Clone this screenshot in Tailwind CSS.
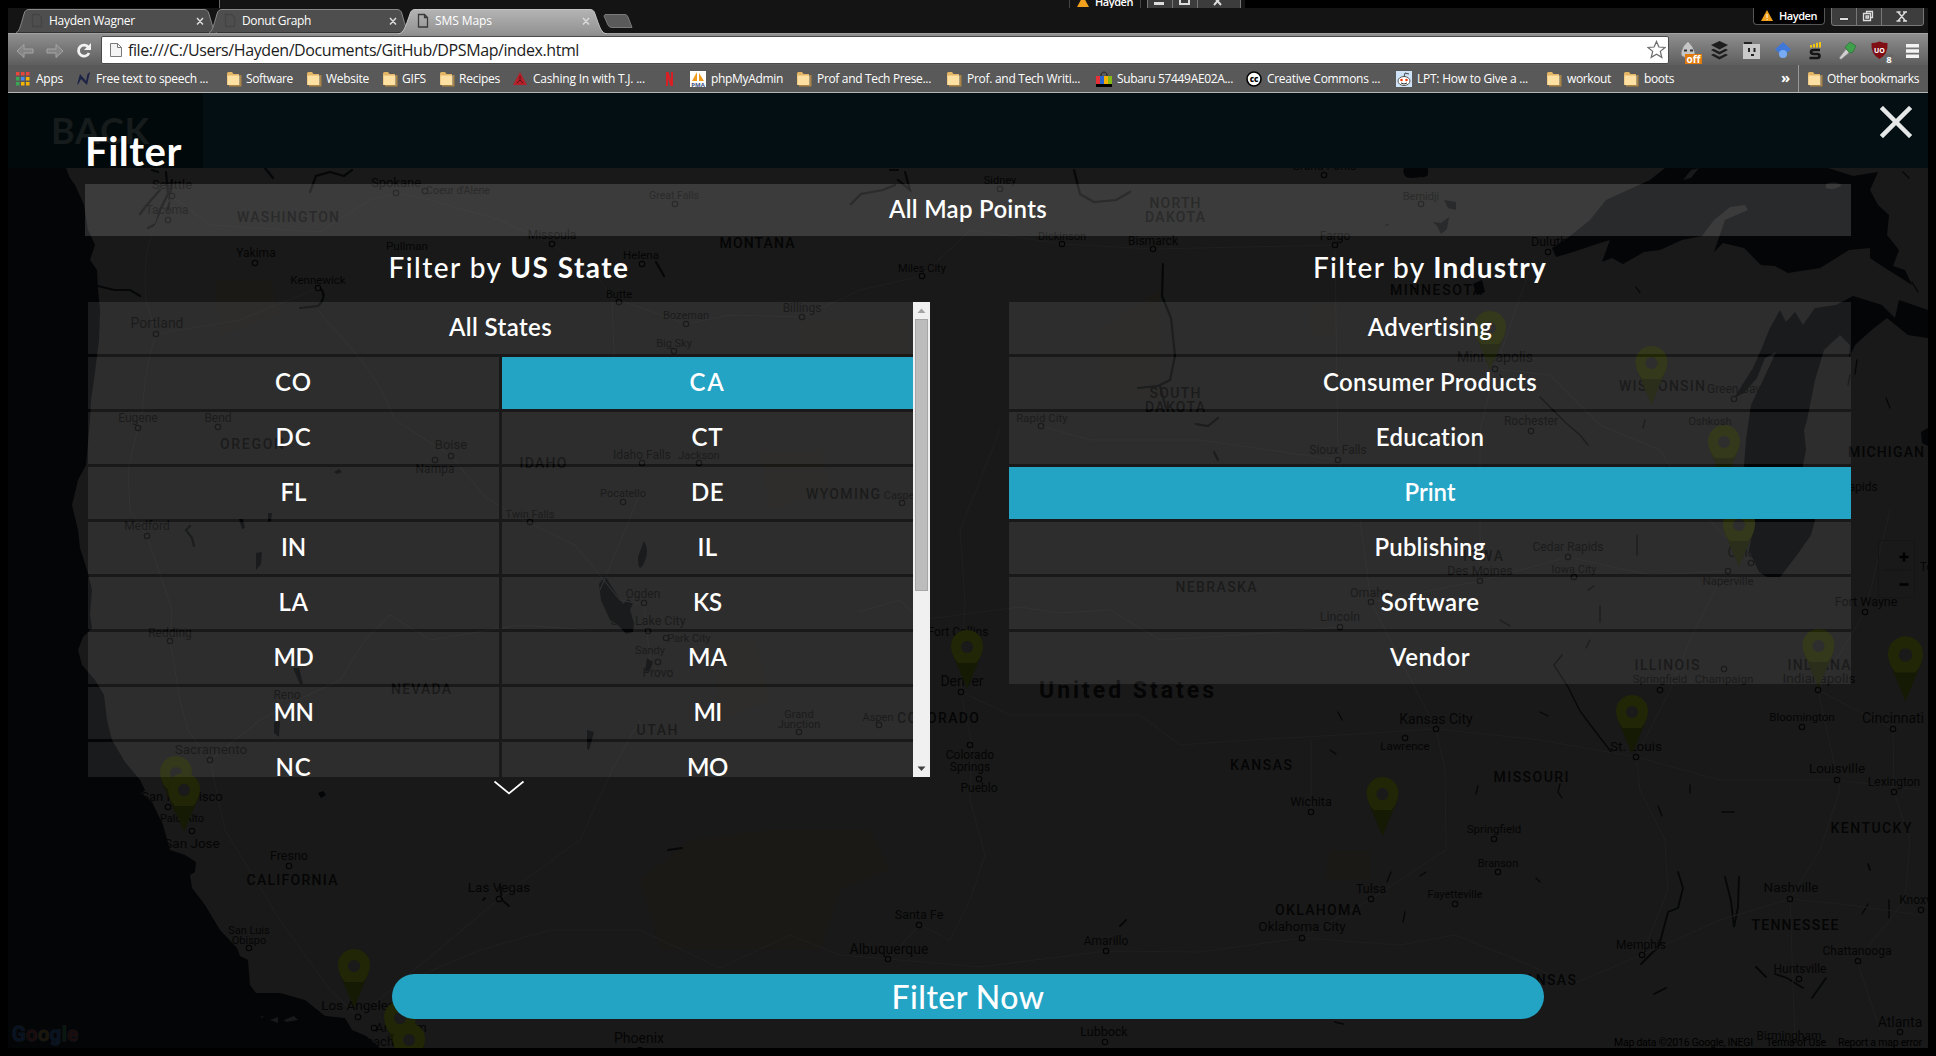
<!DOCTYPE html>
<html lang="en">
<head>
<meta charset="utf-8">
<title>SMS Maps</title>
<script src="https://cdn.jsdelivr.net/npm/@tailwindcss/browser@4"></script>
</head>
<body class="bg-black">
<div class="relative flex h-[1056px] w-[1936px] flex-col overflow-hidden bg-black font-['Open_Sans',sans-serif]">

  <!-- strip of the window behind -->
  <div class="flex h-2 shrink-0 overflow-hidden pl-[219px]">
    <div class="flex h-2 w-[1026px] border-l border-[#666] bg-[#141414]">
      <div class="ml-[849px] flex h-2 w-[72px] items-end justify-center gap-1.5 border-x border-[#444]">
        <svg class="h-2 w-3" viewBox="0 0 12 8"><path d="M6-4L12 7H0z" fill="#f0a01c"/></svg>
        <span class="h-2 text-[11px] leading-[4px] font-semibold text-white" data-w="38">Hayden</span>
      </div>
      <svg class="ml-1.5 h-2 w-[94px]" viewBox="0 0 94 8"><path d="M0 0h94v8H0z" fill="#3c3c3c"/><path d="M25.500 0v8M50.500 0v8M93.500 0v8M.5 0v8" stroke="#777"/><path d="M7 2h10v3H7z" fill="#ddd"/><path d="M33-3h9v7h-9z" fill="none" stroke="#ddd" stroke-width="2"/><path d="M74 5l-7-8M67 5l7-8" stroke="#ddd" stroke-width="2"/></svg>
    </div>
  </div>

  <div class="mx-2 flex h-[1040px] w-[1920px] flex-col overflow-hidden">
    <!-- tab strip -->
    <div class="relative flex h-[25px] shrink-0 justify-between bg-[#141414]">
      <svg class="absolute top-0 left-0 h-[26px] w-[640px]" viewBox="8 8 640 26">
        <defs><linearGradient id="act" x1="0" y1="0" x2="0" y2="1"><stop offset="0" stop-color="#b4b4b4"/><stop offset="1" stop-color="#929292"/></linearGradient></defs>
        <path d="M16 32.500C19 32 20 28 24 14Q25 9.500 29 9.500H204Q208 9.500 209 14C213 28 214 32 217 32.500" fill="#4e4e4e" stroke="#8a8a8a"/>
        <path d="M209 32.500C212 32 213 28 217 14Q218 9.500 222 9.500H397Q401 9.500 402 14C406 28 407 32 410 32.500" fill="#4e4e4e" stroke="#8a8a8a"/>
        <path d="M398 34C404 33 405 28 410 14Q411 9.500 415 9.500H590Q594 9.500 595 14C600 28 601 33 607 34" fill="url(#act)" stroke="#c4c4c4"/>
        <path d="M605 14.500H625Q627 14.500 628 17L632 27.500H612Q609 27.500 608 25L604 16z" fill="#5a5a5a" stroke="#7a7a7a"/>
        <g fill="none" stroke-width="1.300"><path d="M32.500 14.500h6l3 3v9h-9zM225.500 14.500h6l3 3v9h-9z" stroke="#444"/><path d="M418.500 14.500h6l3 3v9.500h-9zM424.500 14.500v3h3" stroke="#3a3a3a"/></g>
        <path d="M197 18l6 6.500M203 18l-6 6.500M390 18l6 6.500M396 18l-6 6.500M583 18l6 6.500M589 18l-6 6.500" stroke="#dadada" stroke-width="1.500"/>
      </svg>
      <div class="relative flex pl-[41px] text-[12px] leading-[26px] whitespace-nowrap text-white">
        <div class="w-[193px]"><span data-w="86">Hayden Wagner</span></div>
        <div class="w-[193px]"><span data-w="69">Donut Graph</span></div>
        <div class="w-[150px]"><span data-w="57">SMS Maps</span></div>
      </div>
      <div class="flex pr-1">
        <div class="flex h-[17px] w-[72px] items-center justify-center gap-1.5 rounded-b border border-t-0 border-[#555] bg-black text-[11px] font-semibold text-white">
          <svg class="h-3 w-3" viewBox="0 0 12 12"><path d="M6 0L12 11H0z" fill="#f0a01c"/><path d="M6 4v4M6 9v1" stroke="#fff"/></svg>
          <span data-w="38">Hayden</span>
        </div>
        <svg class="ml-1.5 h-[18px] w-[93px]" viewBox="0 0 93 18"><path d="M.5 0V15Q.5 17.500 3 17.500H90Q92.500 17.500 92.500 15V0" fill="#3d3d3d" stroke="#777"/><path d="M25.500 0V17M50.500 0V17" stroke="#777"/><path d="M8.500 9.500h9v3h-9z" fill="#ddd" stroke="#333"/><path d="M32.500 5.500h7v7h-7zM35.500 5V3.500h6v6H40M35 8h2.500v2H35z" fill="none" stroke="#ddd" stroke-width="1.300"/><path d="M67 4l7.500 9M74.500 4L67 13M65.500 4h4M72 4h4M65.500 13h4M72 13h4" stroke="#ddd" stroke-width="1.400"/></svg>
      </div>
    </div>

    <!-- toolbar -->
    <div class="flex h-8 shrink-0 items-center border-t border-[#a2a2a2] bg-gradient-to-b from-[#8f8f8f] to-[#5e5e5e]">
      <svg class="h-8 w-[93px] shrink-0" viewBox="8 34 93 32"><g fill="#858585" stroke="#a5a5a5" stroke-width="1"><path d="M17 51l7-6.500v4.500h9v4h-9v4.500z"/><path d="M63 51l-7-6.500v4.500h-9v4h9v4.500z"/></g><path d="M88.500 47.500A5.500 5.500 0 1 0 89 53" fill="none" stroke="#f2f2f2" stroke-width="2.800"/><path d="M91 43v7h-7z" fill="#f2f2f2"/></svg>
      <div class="flex h-[28px] w-[1568px] shrink-0 items-center rounded-xs border border-[#4a4a4a] bg-white pr-0.5 pl-2">
        <svg class="h-4 w-3" viewBox="0 0 12 16"><path d="M.5 1.500h7l4 4v9H.5zM7.500 1.500v4h4" fill="#f4f4f4" stroke="#7a7a7a"/></svg>
        <span class="ml-[6px] text-[16px] leading-none whitespace-nowrap text-[#1c1c1c]" data-w="451">file:///C:/Users/Hayden/Documents/GitHub/DPSMap/index.html</span>
        <svg class="ml-auto h-[19px] w-[19px]" viewBox="0 0 20 20"><path d="M10 1.500l2.500 5.900 6.400.5-4.900 4.100 1.600 6.300L10 14.900l-5.600 3.400L6 12 1.100 7.900l6.400-.5z" fill="#fff" stroke="#6e6e6e" stroke-width="1.300"/></svg>
      </div>
      <svg class="h-8 w-[259px] shrink-0" viewBox="1669 34 259 32">
        <path d="M1688 41q6 6 7 11t-7 5.500-7-5.500 7-11z" fill="#c5c5c5" stroke="#777"/><path d="M1684 50.500h3M1690 50.500h3" stroke="#333" stroke-width="2"/><rect x="1685" y="54" width="17" height="10" fill="#e07b0c"/><text x="1693.500" y="62.500" font-size="10" font-weight="700" fill="#fff" text-anchor="middle">off</text>
        <g fill="#1d1d1d"><path d="M1719.500 41l8.500 4-8.500 4.500-8.500-4.500z"/><path d="M1711 50l2.500-1.200 6 3 6-3L1728 50l-8.500 4.400z"/><path d="M1711 55l2.500-1.200 6 3 6-3L1728 55l-8.500 4.500z"/></g>
        <path d="M1743 44h17v15h-17z" fill="#c9c9c9"/><path d="M1744 42h8v2h-8zM1748 48h2v4h-2zM1753.500 48h2v4h-2zM1751 54h3v2h-3z" fill="#222"/>
        <path d="M1783 42l8 7.500-5 4h-6l-5-4z" fill="#3f78d8"/><circle cx="1783" cy="54" r="4" fill="#79aaf5"/>
        <path d="M1820 50h-6q-3 0-3 2t3 2h3.500q2 0 2 2t-2 2h-8" fill="none" stroke="#161616" stroke-width="2.600"/><path d="M1810 45h2v2.500h-2zM1813 44h2v3.500h-2zM1816 42.800h2v4.700h-2zM1819 42h2v5.500h-2z" fill="#f3c513"/>
        <path d="M1839 58l7-9 4 3-9 7.500z" fill="#cfcfcf" stroke="#777" stroke-width=".7"/><path d="M1845 47l5-5 6 4-3 6-3.500 1z" fill="#3fa04c" stroke="#286f32" stroke-width=".7"/>
        <path d="M1871.500 43q4 0 8-1.500 4 1.500 8 1.500 1 11-8 16-9-5-8-16z" fill="#7f0f14"/><text x="1879.500" y="52.500" font-size="7" font-weight="700" fill="#fff" text-anchor="middle">UO</text><rect x="1885" y="54" width="8" height="10" rx="1" fill="#666"/><text x="1889" y="63" font-size="9.500" font-weight="700" fill="#fff" text-anchor="middle">8</text>
        <path d="M1906 44h13v3.500h-13zM1906 49.300h13v3.500h-13zM1906 54.600h13v3.500h-13z" fill="#f4f4f4"/>
      </svg>
    </div>

    <!-- bookmarks -->
    <div id="bookmarks" class="flex h-[28px] shrink-0 items-center border-b border-[#b4b4b4] bg-[#595959] pl-2 text-[12px] whitespace-nowrap text-white"></div>

    <!-- page -->
    <div class="relative h-[955px] w-[1920px] overflow-hidden bg-[#191919]">
      <svg id="map" class="absolute inset-0 h-[955px] w-[1920px] font-[Roboto,sans-serif]" viewBox="8 93 1920 955">
        <g fill="#1a1916"><path d="M215 280h55l10 35-60 20zM640 880l50-40 80-10 100 0 20 40-50 20-20 60-160 0zM800 320h110v40H800zM760 450h60l10 40-60 20zM715 640h40l15 60-50 20zM1100 330l60-40v110h-60zM1330 850h40v30h-45zM1310 305h25v30h-25z"/></g>
        <path fill="#040507" d="M8 168H66L70 178 75 185 84 205 88 230 95 245 90 260 97 270 98 290 100 310 99 340 94 380 91 400 90 420 86 465 78 480 72 505 78 530 80 548 87 570 92 590 90 615 92 628 83 637 78 650 82 665 95 680 104 695 107 720 112 740 125 762 140 780 145 790 141 794 152 802 163 825 170 850 185 855 196 862 195 872 190 875 192 888 205 905 220 930 237 948 240 956 248 960 250 985 256 993 280 993 305 1000 325 1016 345 1018 352 1030 366 1036 380 1048H8z"/>
        <g fill="#040507">
          <path d="M1665 168L1650 180 1606 200 1590 220 1569 237 1552 248 1556 257 1573 252 1600 243 1610 240 1602 262 1612 258 1623 264 1644 252 1660 250 1682 240 1702 236 1714 220 1730 207 1745 205 1748 210 1725 220 1714 252 1723 243 1744 248 1761 265 1775 266 1788 273 1820 268 1849 250 1870 248 1870 258 1882 266 1901 278 1912 285 1905 270 1893 266 1899 250 1887 235 1889 215 1878 205 1870 190 1878 172 1853 176 1828 168z"/>
          <path d="M1780 310L1769 330 1761 350 1753 368 1734 398 1744 393 1757 378 1765 358 1776 352 1763 380 1751 405 1746 440 1744 465 1752 490 1755 520 1749 550 1759 572 1767 577 1780 577 1797 555 1811 535 1815 520 1809 490 1802 470 1806 450 1804 430 1807 420 1815 380 1824 350 1840 335 1850 345 1849 358 1855 345 1866 335 1874 328 1887 318 1908 335 1928 338V310L1899 300 1895 318 1882 305 1853 296 1836 305 1815 308 1803 325 1795 312 1786 322z"/>
          <path d="M605 576l-6 8 2 16 9 20 8 5 8 9 7-2 1-9-4-13 3-7-5-4-5 5-9-14z"/>
          <path d="M1404 168h24v7q-3 3-8 2-8 2-14 0-4-4-2-9zM1921 432l7-4v18l-6-3z"/>
          <path d="M644 541q6 10 0 22t-6-6zM239 519h4l2 9-3 1zM334 472l5-3 3 3-5 2zM256 553l6-1-1 12-5 6zM268 513h4l-1 8-3 1zM293 668l6 0 4 16-3 0zM274 722l6-1-1 16-5-4zM587 730l7 2-5 18-2-1zM318 793l5-2 3 4-5 3zM1473 284l9-4 3 12-8 3zM1444 200l12 2 0 8-8-2zM1433 222l8 1 8-6-2 12-6 5-4-8zM647 658l6 4-3 8-5 2z"/>
        </g>
        <g fill="none" stroke="#060708" stroke-linecap="round" stroke-width="2.200">
          <path d="M152 170l6 2M166 172l2 22-8 16-4 14-8 4M160 190l-14 16-6 8M172 180l-4 30M265 168l8 10M310 192l6-16 14-4 14 4 8-6M890 170l8 0M905 172l5 18-12-10M895 185l-12 5-22 4-10 10M1074 170l6 24 14 8 22-2 14-8M94 285l20 5 16 0 10 6M320 288q8 8-2 18l-18 2M656 262l8 14M1163 264l-1 32 9 22 4 38-5 24-12 6-20 2M1160 386l6 22M190 526l-4 4 6 8 2 8M1218 418l-10 8-12-2M1214 452l4 8"/>
          <path d="M1725 877l6 24 3 26 4-20 1-30M1678 872l5 16-5 20-10 4-9 34-18 18M1756 967l10 10M1775 974l12 4 16 10M1812 998l14-20M1654 994l12-6M1488 991l10 6M1335 1022l8 2M1868 864l2 6M500 886l2 14 7 6M483 900l2-2M1120 926l6-6M668 850l14-2" stroke-width="1.800"/>
          <path d="M1590 640l-4 8M1600 606l0 16M1500 620l10 6M1562 655l-8 10 14 22 12 24 12 16 20 26M1637 535v20M1478 786l-2 8M1536 878l4 4M1391 872l-4 10M1420 876l6-4M1405 912l-2 10M1560 784l-2 8 4 6M1658 806l4 10M1722 812l12 0M1690 785v8M1500 375l4 6M1540 397l12 12 14 14 14 12 8 10M1645 420l-2 8M1410 285l6 4M1386 225h2M1636 287l4 6M1903 172l6 6M1912 282l6 10M1886 398l4 10M1850 375l-2 10M1857 360l-2 14M1588 590l6-4M1540 712l8 4M1330 750l6 4M1338 712l4 8M1868 904l-6 10M1889 900l0 18" stroke-width="1.300"/>
        </g>
        <g fill="#191919"><path d="M1683 180l8-10 8-2-8 10zM1826 184q8-4 16 1-8 6-16 3zM270 1020l8-3 0 6zM284 1020l10-4 4 4-12 2zM260 1017l4-1-2 2z"/></g>
        <g fill="none" stroke="#1f1f1f" stroke-width="1.100">
          <path d="M172 196C150 230 142 250 146 300L156 334C140 380 145 420 138 428L128 470 130 510 147 536 162 580 172 610 170 641 180 700 188 730 210 760 225 830 280 920 330 990 358 1017"/>
          <path d="M172 196L210 225 320 232 370 200 396 193 430 200 500 220 552 244 600 280 612 300 615 380M156 334L240 320 318 288M318 310C350 350 370 360 395 420L451 456 485 497 523 520 575 545 620 600 644 605 650 660M640 494L600 590M619 300L686 324 730 315 802 317 860 290 922 276 970 230 1062 244 1153 249 1335 245M210 760L260 720 287 705 340 680 365 640 390 615 430 640 520 625 590 630"/>
          <path d="M499 899L580 840 612 770 640 720M358 1017L499 899M410 980L480 950 550 930 640 930 720 968 790 935 840 955 888 959 980 967 1106 951 1200 952 1302 938 1400 945 1455 935 1530 965 1570 985 1642 955 1720 920 1790 899 1850 905 1920 915"/>
          <path d="M888 959L920 925 950 940 970 900 985 855 970 800 972 745 961 692 965 600 960 530 1000 430M961 692L1010 715 1140 715 1180 745 1250 740 1340 735 1436 729 1540 740 1636 757 1720 780 1837 780 1920 790M1041 426L1090 440 1200 440 1338 460 1360 520 1371 602 1436 729 1445 770 1446 850 1371 899 1302 938"/>
          <path d="M1335 245L1338 460M1371 602L1480 581 1568 557 1650 575 1728 571M1480 581V431L1495 369 1535 255M1495 369L1550 375 1600 425 1660 450 1690 500 1751 563M1636 757L1670 690 1690 640 1720 580M1311 812V740M1636 757L1640 790 1665 840 1668 890 1642 955M1790 899L1820 850 1840 790 1818 690 1865 612 1890 510M1818 690L1893 729 1894 792 1910 840 1905 900 1857 961 1880 1030M1790 899L1795 1040M858 612L900 600 920 620 1020 607 1060 613 1110 610 1160 640 1240 635 1340 627"/>
        </g>
        <g id="labels" fill="#050505"></g>
        <g id="pins"></g>
        <g fill="none" stroke="#151515"><path d="M1878.500 540.500h36v57h-36zM1882 570h29"/></g>
        <path d="M1899.500 557h9M1904 552.500v9M1899.500 584.500h9" stroke="#000" stroke-width="2.500"/>
        <g font-size="10.500" fill="#000"><text x="1614" y="1046" textLength="139">Map data ©2016 Google, INEGI</text><text x="1766" y="1046" textLength="60">Terms of Use</text><text x="1838" y="1046" textLength="84">Report a map error</text></g>
        <text x="12" y="1041" font-size="20" font-weight="500" textLength="66" stroke="#11151a" stroke-width="1.500" paint-order="stroke"><tspan fill="#071322">G</tspan><tspan fill="#1c0b0a">o</tspan><tspan fill="#1c1708">o</tspan><tspan fill="#071322">g</tspan><tspan fill="#08180d">l</tspan><tspan fill="#1c0b0a">e</tspan></text>
      </svg>

      <!-- site header under the overlay -->
      <div class="absolute top-0 left-0 flex h-[75px] w-[1920px] bg-[#030f13]">
        <div class="flex w-[195px] bg-[#02090b] pt-[13px] pl-[43px] font-[Lato,sans-serif] text-[36px] leading-[48px] font-bold text-[#161b1c]"><span data-w="99">BACK</span></div>
      </div>
      <svg class="absolute top-[13px] left-[1872px] h-8 w-8" viewBox="0 0 32 32"><path d="M3 3l26 26M29 3L3 29" stroke="#e6e8e8" stroke-width="4.500" stroke-linecap="square"/></svg>

      <!-- filter overlay -->
      <div class="relative flex w-[1843px] flex-col pl-[77px] font-[Lato,sans-serif] text-[24px] font-medium text-white">
        <h1 class="h-[91px] pt-[33px] text-[40px] leading-[50px] font-bold"><span data-w="97">Filter</span></h1>
        <button class="h-[52px] bg-white/[.15] pb-0.5 text-center font-semibold"><span data-w="158">All Map Points</span></button>
        <div class="grid grid-cols-[842px_842px] gap-x-[79px] pl-[3px] text-center">
          <h2 class="h-[66px] pt-[11px] text-[28px] leading-[40px]"><span data-w="241">Filter by <b>US State</b></span></h2>
          <h2 class="h-[66px] pt-[11px] text-[28px] leading-[40px]"><span data-w="234">Filter by <b>Industry</b></span></h2>
          <div>
            <div class="flex h-[475px] overflow-hidden">
              <div id="states" class="grid w-[825px] shrink-0 auto-rows-[52px] grid-cols-2 gap-[3px] leading-[50px] font-semibold"></div>
              <div class="flex w-[17px] shrink-0 flex-col items-center bg-[#f0f0f0]">
                <svg class="h-[17px] w-[17px] shrink-0" viewBox="0 0 17 17"><path d="M4.500 11l4-4.500 4 4.500z" fill="#a3a3a3"/></svg>
                <div class="h-[272px] w-[13px] shrink-0 border border-[#a6a6a6] bg-[#bcbcbc]"></div>
                <svg class="mt-auto h-[17px] w-[17px] shrink-0" viewBox="0 0 17 17"><path d="M4.500 6.500l4 4.500 4-4.500z" fill="#404040"/></svg>
              </div>
            </div>
            <svg class="mx-auto mt-[3px] h-4 w-8" viewBox="0 0 32 16"><path d="M1.500 1.500L16 13.500 30.500 1.500" fill="none" stroke="#fff" stroke-width="1.700"/></svg>
          </div>
          <div id="industries" class="grid auto-rows-[52px] content-start gap-[3px] leading-[50px] font-semibold"></div>
        </div>
        <button class="mt-[178px] ml-[307px] h-[45px] w-[1152px] rounded-full bg-[#24a4c5] text-[32px] leading-[44px]"><span data-w="153">Filter Now</span></button>
      </div>
    </div>
  </div>
</div>

<script>
const folder = '<svg class="h-4 w-4 shrink-0" viewBox="0 0 16 16"><path d="M1 2.500Q1 1 2.500 1H6l1.500 2H13v11H1z" fill="#e3b565"/><path d="M14 4h1.500v11.500H3V14h11z" fill="#a98548"/><path d="M1.500 4.500h12V14h-12z" fill="#ffe0a3"/></svg>';
const box = s => '<svg class="h-4 w-4 shrink-0" viewBox="0 0 16 16">' + s + '</svg>';
const grid = box('<path d="M0 1h3.500v3.500H0zM5 1h3.500v3.500H5zM10 1h3.500v3.500H10z" fill="#e8453c"/><path d="M0 6h3.500v3.500H0zM0 11h3.500v3.500H0z" fill="#3aa757"/><path d="M5 6h3.500v3.500H5z" fill="#4a8af4"/><path d="M10 6h3.500v3.500H10zM5 11h3.500v3.500H5zM10 11h3.500v3.500H10z" fill="#f4b400"/>');
const marks = [
  [grid,'Apps',16,36,27],
  [box('<path d="M1 14L4 3l6 7 1.500-7L14 1l-3 13-6-6-2 4z" fill="#1c2347"/>'),'Free text to speech ...',76,96,112],
  [folder,'Software',226,246,47],[folder,'Website',306,326,43],[folder,'GIFS',382,402,24],[folder,'Recipes',439,459,41],
  [box('<path d="M8 1l7 13H1z" fill="#b3202a"/><path d="M8 5v4M5 12l3-3 3 3" stroke="#5d0f14" fill="none"/>'),'Cashing In with T.J. ...',512,533,112],
  [box('<path d="M5 1h2.500L10 9V1h2v14H9.500L7 7v8H5z" fill="#d81f26"/>'),'',661,680,0],
  [box('<path d="M0 0h16v16H0z" fill="#fff"/><path d="M7 1v9H2zM9 2l5 8H9z" fill="#f29a1c"/><text x="8" y="16" font-size="6" font-weight="700" text-anchor="middle" fill="#3b4d80">PMA</text>'),'phpMyAdmin',690,711,72],
  [folder,'Prof and Tech Prese...',796,817,114],[folder,'Prof. and Tech Writi...',946,967,113],
  [box('<path d="M5 5V3q3-4 6 0v2" fill="none" stroke="#222"/><path d="M0 5h4v9H0z" fill="#e53238"/><path d="M4 5h4v9H4z" fill="#2a62d0"/><path d="M8 5h4v9H8z" fill="#f5af02"/><path d="M12 5h4v9h-4z" fill="#86b817"/><path d="M0 13h16v3H0z" fill="#000"/>'),'Subaru 57449AE02A...',1096,1117,116],
  [box('<circle cx="8" cy="8" r="7" fill="#fff" stroke="#000" stroke-width="1.600"/><text x="8" y="11" font-size="8" font-weight="800" text-anchor="middle" fill="#000">cc</text>'),'Creative Commons ...',1246,1267,113],
  [box('<path d="M0 0h16v16H0z" fill="#cee3f8"/><path d="M8 6l1-4 4 1" fill="none" stroke="#444"/><ellipse cx="8" cy="10" rx="6" ry="4.500" fill="#fff" stroke="#555"/><circle cx="5.500" cy="9" r="1.300" fill="#f23a10"/><circle cx="10.500" cy="9" r="1.300" fill="#f23a10"/><path d="M5 12q3 2 6 0" stroke="#333" fill="none"/>'),'LPT: How to Give a ...',1396,1417,111],
  [folder,'workout',1546,1567,44],[folder,'boots',1623,1644,30]
];
const bar = document.getElementById('bookmarks');
marks.forEach((m, i) => {
  const next = i + 1 < marks.length ? marks[i + 1][2] : 1781;
  bar.innerHTML += `<div class="flex shrink-0 items-center" style="width:${next - m[2]}px">${m[0]}<span style="margin-left:${m[3] - m[2] - 16}px" data-w="${m[4]}">${m[1]}</span></div>`;
});
bar.innerHTML += `<span class="w-[17px] shrink-0 pb-0.5 text-[15px] font-bold">»</span><div class="flex h-full shrink-0 items-center gap-1 border-l border-[#999] pl-2">${folder}<span data-w="92">Other bookmarks</span></div>`;

const states = [['All States',103],['CO',37],['CA',36],['DC',36],['CT',32],['FL',26],['DE',33],['IN',25],['IL',20],['LA',30],['KS',29],['MD',40],['MA',39],['MN',40],['MI',28],['NC',36],['MO',41]];
document.getElementById('states').innerHTML = states.map(([s, w], i) =>
  `<div class="${i === 0 ? 'col-span-2 bg-white/[.09]' : s === 'CA' ? 'bg-[#24a4c5]' : 'bg-white/[.09]'}"><span data-w="${w}">${s}</span></div>`).join('');
const industries = [['Advertising',125],['Consumer Products',214],['Education',109],['Print',51],['Publishing',111],['Software',98],['Vendor',80]];
document.getElementById('industries').innerHTML = industries.map(([s, w]) =>
  `<div class="${s === 'Print' ? 'bg-[#24a4c5]' : 'bg-white/[.09]'}"><span data-w="${w}">${s}</span></div>`).join('');

/* spread each label over its design width */
function fit() {
  document.querySelectorAll('[data-w]').forEach(el => {
    const n = el.textContent.length, w = +el.dataset.w;
    el.style.letterSpacing = '0px';
    if (n > 1 && w) el.style.letterSpacing = ((w - el.getBoundingClientRect().width) / n).toFixed(3) + 'px';
  });
}
fit();
addEventListener('load', () => { fit(); document.fonts.ready.then(fit); requestAnimationFrame(fit); });

/* towns: name, x, baseline, size, marker x, marker y */
const towns = [
['Seattle',172,189,13,172,196],['Tacoma',167,214,12,168,220],['Spokane',396,187,13,396,193],["Coeur d'Alene",458,194,10.5,425,191],['Great Falls',674,199,10.5,675,204],['Missoula',552,239,12,552,244],['Yakima',256,257,12,255,263],['Pullman',407,250,11.5],['Helena',641,259,11.5,642,264],['Kennewick',318,284,11.500,318,288],['Butte',619,298,11,619,302],['Portland',157,328,14,156,334],['Bozeman',686,319,11,686,324],['Big Sky',674,347,11,674,351],['Billings',802,312,12,802,317],['Miles City',922,272,11,922,276],['Sidney',1000,184,11,1000,189],['Dickinson',1062,240,11,1062,244],['Bismarck',1153,245,12,1153,249],
['Eugene',138,422,12,138,428],['Bend',218,422,12,218,427],['Boise',451,449,13,451,456],['Nampa',435,473,12,435,460],['Idaho Falls',642,459,12,642,463],['Jackson',699,459,11,699,463],['Pocatello',623,497,11,623,502],['Twin Falls',530,518,11,530,522],['Medford',147,530,12,147,536],['Redding',170,637,12,170,641],['Ogden',643,598,12,644,603],['Salt Lake City',648,625,12.5,648,631],['Sandy',650,654,11],['Provo',658,677,12,658,662],['Park City',689,642,11,666,638],['Reno',287,699,12],['Sacramento',211,754,13.5,210,760],['Casper',901,499,11,902,503],['Grand',799,718,11],['Junction',799,728,11,799,732],['Aspen',878,721,11,879,725],['Fort Collins',958,636,12],['Denver',962,686,14,961,692],['Rapid City',1042,422,11.5,1041,426],
['Colorado',970,759,12,970,745],['Springs',970,771,12],['Pueblo',979,792,12,979,779],['Wichita',1311,806,12.5,1311,812],['Santa Fe',919,919,12.5,919,925],['Albuquerque',889,954,14,888,959],['Amarillo',1106,945,12,1106,951],['Lubbock',1104,1036,12.5,1105,1042],['Oklahoma City',1302,931,13.500,1302,938],['Tulsa',1371,893,12.500,1371,899],['Fayetteville',1455,898,11,1455,904],['Branson',1498,867,11,1498,872],['Springfield',1494,833,11.5,1494,839],['Memphis',1641,949,12,1642,955],['Nashville',1791,892,13.500,1790,899],['Knoxville',1923,904,12,1921,910],['Chattanooga',1857,955,12,1858,961],['Huntsville',1800,973,12,1799,979],['Atlanta',1900,1027,14,1900,1032],['Birmingham',1789,1040,12],['Lexington',1894,786,12,1894,792],['Louisville',1837,773,13.500,1837,780],['St. Louis',1636,751,13.500,1636,757],['Lawrence',1405,750,11.500,1405,738],['Kansas City',1436,724,14,1436,729],['Bloomington',1802,721,11.5,1802,727],['Cincinnati',1893,723,14,1893,729],['Indianapolis',1819,683,13.500,1818,690],['Springfield',1660,683,11.500,1660,690],['Champaign',1724,683,11.500,1724,669],['Fort Wayne',1866,606,12.5,1865,612],['Naperville',1728,585,11.500,1728,571],['Chicago',1753,557,14,1751,563],['Des Moines',1480,575,12.500,1480,581],['Cedar Rapids',1568,551,12,1568,557],['Iowa City',1574,573,11,1574,577],['Omaha',1370,597,12.500,1371,602],['Lincoln',1340,621,12.500,1340,627],['Sioux Falls',1338,454,12,1338,460],['Rochester',1531,425,12,1531,431],['Oshkosh',1710,425,11],['Green Bay',1734,393,12,1734,399],['Minneapolis',1495,362,14,1495,369],['Duluth',1549,246,12.500,1548,252],['Fargo',1335,240,12,1335,245],['Bemidji',1421,200,11,1421,204],['Grand Forks',1324,170,12,1324,175],['Grand Rapids',1842,491,12],['Fresno',289,860,12.500,289,866],['San Jose',192,848,13.500,192,831],['San Francisco',182,801,13,168,807],['Palo Alto',182,822,11],['San Luis',249,934,11],['Obispo',249,944,11,249,948],['Los Angeles',358,1010,13.500,358,1017],['Anaheim',401,1032,13,374,1028],['Long Beach',360,1046,13],['Las Vegas',499,892,13.500,499,899],['Phoenix',639,1043,14,640,1050],['Toledo',1938,571,12]];
const regions = [['WASHINGTON',288,222,102],['MONTANA',757,248,75],['NORTH',1175,208,51],['DAKOTA',1175,222,60],['SOUTH',1175,398,51],['DAKOTA',1175,412,60],['OREGON',252,449,64],['IDAHO',543,468,47],['NEVADA',421,694,60],['UTAH',657,735,41],['WYOMING',843,499,74],['COLORADO',938,723,82],['NEBRASKA',1216,592,81],['KANSAS',1261,770,62],['OKLAHOMA',1318,915,86],['MISSOURI',1531,782,75],['TENNESSEE',1795,930,87],['KENTUCKY',1871,833,81],['ARKANSAS',1535,985,82],['INDIANA',1819,670,63],['ILLINOIS',1667,670,65],['IOWA',1483,561,40],['WISCONSIN',1662,391,86],['MINNESOTA',1436,295,92],['MICHIGAN',1886,457,76],['CALIFORNIA',292,885,91]];
let out = towns.map(t => `<text x="${t[1]}" y="${t[2]}" font-size="${t[3]}" text-anchor="middle">${t[0]}</text>` +
  (t[4] ? `<circle cx="${t[4]}" cy="${t[5]}" r="2.700" fill="#1b1b1b" stroke="#050505" stroke-width="1.200"/>` : '')).join('');
out += regions.map(r => `<text x="${r[1] - r[3] / 2}" y="${r[2]}" font-size="14" font-weight="500" textLength="${r[3]}">${r[0]}</text>`).join('');
out += '<text x="1039" y="698" font-size="23" font-weight="700" textLength="175">United States</text>';
document.getElementById('labels').innerHTML = out;

/* pins: x, head centre y, scale */
const pins = [[176,773,1],[184,790,1],[354,966,1],[400,1018,1],[409,1040,1],[967,647,1],[1490,328,1],[1651.5,363,1],[1724,442,1],[1739,525,1],[1818.5,646,1],[1905.5,655,1.1],[1632,712,1],[1382.5,794,1]];
document.getElementById('pins').innerHTML = pins.map(p =>
  `<g transform="translate(${p[0]} ${p[1]}) scale(${p[2]})"><path d="M-15 6L0 42 15 6z" fill="#151a05"/><path d="M0-17A16 16 0 0 1 16 0Q15 10 9 16H-9Q-15 10-16 0A16 16 0 0 1 0-17z" fill="#202606"/><circle r="6" fill="#1a1a1a"/></g>`).join('');
</script>
</body>
</html>
